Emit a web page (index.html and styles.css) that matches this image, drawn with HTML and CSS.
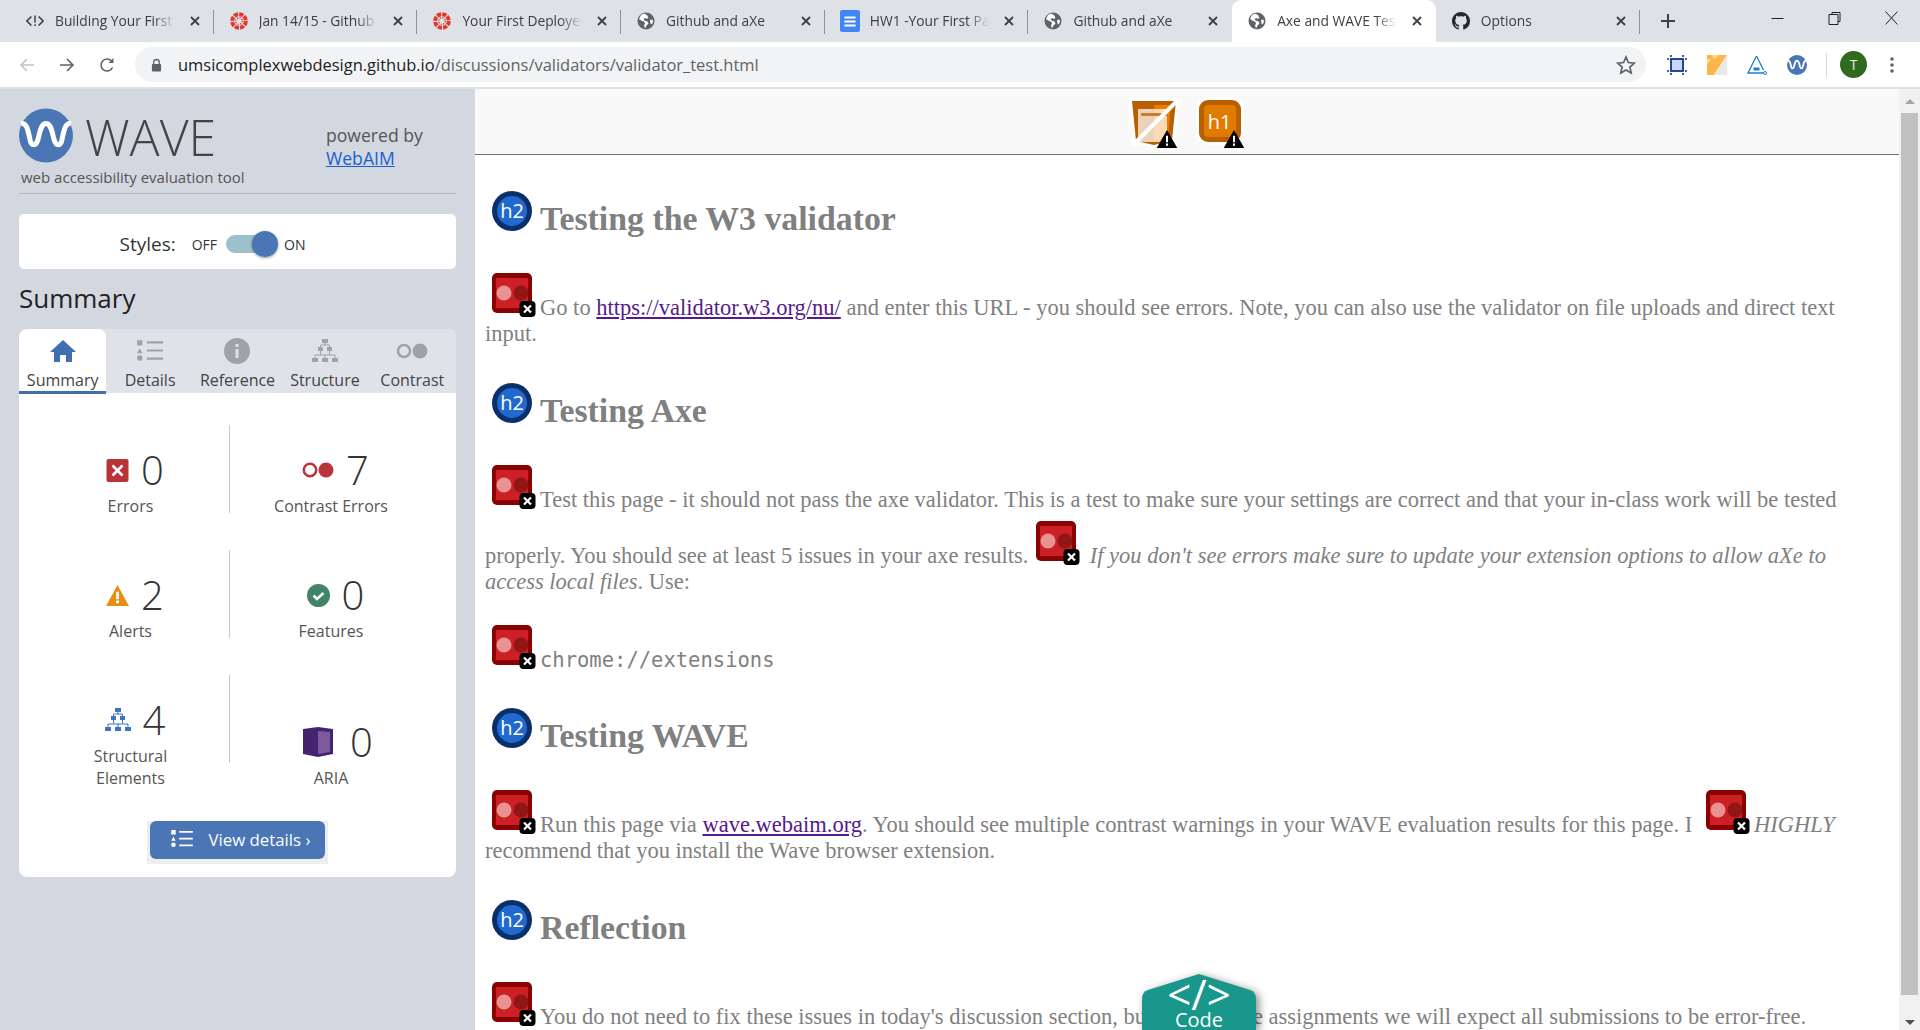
FILE: index.html
```html
<!DOCTYPE html>
<html lang="en">
<head>
    <meta charset="UTF-8">
    <meta name="viewport" content="width=device-width, initial-scale=1.0">
    <title>Axe and WAVE Test</title>
    <link rel="stylesheet" href="styles.css">
</head>
<body>
    <!-- shared icons -->
    <svg class="defs" aria-hidden="true">
        <symbol id="i-globe" viewBox="0 0 18 18">
            <circle cx="9" cy="9" r="8.5" fill="#5f6368"/>
            <path d="M7 1.5 4 3 2 7l3 2 2 .5 1 2-1 2 1 3 1.5-3 2-2-1-2-3-1-1-1.500 2-1 1 1 2-1-1.500-3zM13 8l2.500-.5.5 2.500-1.500 2.500-1-1z" fill="#fff"/>
        </symbol>
        <symbol id="i-canvas" viewBox="0 0 20 20">
            <circle cx="10" cy="10" r="7.600" fill="none" stroke="#e7352b" stroke-width="4.400" stroke-dasharray="4.700 1.270"/>
            <circle cx="10" cy="10" r="3.700" fill="none" stroke="#e7352b" stroke-width="1.500" stroke-dasharray="1.500 1.400"/>
        </symbol>
        <symbol id="i-close" viewBox="0 0 12 12">
            <path d="M2 2l8 8M10 2l-8 8" stroke="#3c4043" stroke-width="1.800" fill="none"/>
        </symbol>
        <symbol id="i-list" viewBox="0 0 24 20">
            <path d="M0 0h5v5H0zM2.500 7.500 5 12H0zM9 1h15v2H9zM9 8.500h15v2H9zM9 16h15v2H9z" fill="currentColor"/>
            <circle cx="2.500" cy="16.500" r="2.500" fill="currentColor"/>
        </symbol>
        <symbol id="i-tree" viewBox="0 0 26 24">
            <path d="M10 0h6v4h-6zM6 8h5v4H6zM15 8h5v4h-5zM0 19h6v4H0zM10 19h6v4h-6zM20 19h6v4h-6z" fill="currentColor"/>
            <path d="M13 4v2.500M8.500 8V6h9v2M8.500 12v3.500M17.500 12v3.500M3 19v-3h20v3M13 15.500V19" stroke="currentColor" fill="none"/>
        </symbol>
        <symbol id="i-contrast" viewBox="0 0 32 16">
            <circle cx="8" cy="8" r="6" fill="none" stroke="currentColor" stroke-width="2.500"/>
            <circle cx="24" cy="8" r="7.500" fill="currentColor"/>
        </symbol>
        <symbol id="i-error" viewBox="0 0 44 44">
            <rect width="40" height="40" rx="5" fill="#8b0000"/>
            <rect x="4" y="5" width="32" height="30" fill="#cb2026"/>
            <circle cx="12" cy="20" r="7.500" fill="#e89292"/>
            <circle cx="29" cy="20" r="7.500" fill="#921616"/>
            <rect x="27.500" y="28" width="16" height="16" rx="4" fill="#000"/>
            <path d="M32 32.500l7 7M39 32.500l-7 7" stroke="#fff" stroke-width="2.200"/>
        </symbol>
        <symbol id="i-h2" viewBox="0 0 44 44">
            <circle cx="20" cy="20" r="20" fill="#0a2f6b"/>
            <circle cx="20" cy="20" r="15" fill="#2168cf"/>
        </symbol>
        <symbol id="i-alert" viewBox="0 0 16 14">
            <path d="M8 0l8 14H0z" fill="#000"/>
            <path d="M7.200 4.500h1.600v5H7.200zM7.200 10.500h1.600v1.800H7.200z" fill="#fff"/>
        </symbol>
    </svg>

    <!-- browser chrome -->
    <div class="tabstrip">
        <div class="tab tab-sep">
            <svg class="tab-icon" viewBox="0 0 20 14"><path d="M6 2 1 7l5 5M14 2l5 5-5 5" fill="none" stroke="#3c4043" stroke-width="1.800"/><path d="M9.200 1h1.600v8H9.200zM9.200 10.500h1.600v2H9.200z" fill="#3c4043"/></svg>
            <span class="tab-title">Building Your First Page</span>
            <svg class="tab-close"><use href="#i-close"/></svg>
        </div>
        <div class="tab tab-sep">
            <svg class="tab-icon"><use href="#i-canvas"/></svg>
            <span class="tab-title">Jan 14/15 - Github and</span>
            <svg class="tab-close"><use href="#i-close"/></svg>
        </div>
        <div class="tab tab-sep">
            <svg class="tab-icon"><use href="#i-canvas"/></svg>
            <span class="tab-title">Your First Deployed Site</span>
            <svg class="tab-close"><use href="#i-close"/></svg>
        </div>
        <div class="tab tab-sep">
            <svg class="tab-icon"><use href="#i-globe"/></svg>
            <span class="tab-title">Github and aXe</span>
            <svg class="tab-close"><use href="#i-close"/></svg>
        </div>
        <div class="tab tab-sep">
            <svg class="tab-icon tab-icon-doc" viewBox="0 0 18 22" preserveAspectRatio="none"><rect width="18" height="22" rx="2" fill="#4285f4"/><path d="M4 6.500h10v2H4zM4 10.500h10v2H4zM4 14.500h10v2H4z" fill="#fff"/></svg>
            <span class="tab-title">HW1 -Your First Page</span>
            <svg class="tab-close"><use href="#i-close"/></svg>
        </div>
        <div class="tab">
            <svg class="tab-icon"><use href="#i-globe"/></svg>
            <span class="tab-title">Github and aXe</span>
            <svg class="tab-close"><use href="#i-close"/></svg>
        </div>
        <div class="tab tab-active">
            <svg class="tab-icon"><use href="#i-globe"/></svg>
            <span class="tab-title">Axe and WAVE Test Page</span>
            <svg class="tab-close"><use href="#i-close"/></svg>
        </div>
        <div class="tab tab-sep">
            <svg class="tab-icon" viewBox="0 0 16 16"><path fill="#24292e" d="M8 0C3.580 0 0 3.580 0 8c0 3.540 2.290 6.530 5.470 7.590.4.070.55-.17.55-.38 0-.19-.01-.82-.01-1.490-2.010.37-2.530-.49-2.690-.94-.09-.23-.48-.94-.82-1.130-.28-.15-.68-.52-.01-.53.63-.01 1.080.58 1.230.82.72 1.210 1.870.87 2.330.66.07-.52.28-.87.51-1.070-1.780-.2-3.640-.89-3.640-3.950 0-.87.31-1.590.82-2.150-.08-.2-.36-1.020.08-2.120 0 0 .67-.21 2.200.82.64-.18 1.320-.27 2-.27.68 0 1.360.09 2 .27 1.530-1.040 2.200-.82 2.200-.82.44 1.100.16 1.920.08 2.120.51.56.82 1.270.82 2.150 0 3.070-1.870 3.750-3.650 3.950.29.25.54.73.54 1.480 0 1.070-.01 1.930-.01 2.200 0 .21.15.46.55.38A8.013 8.013 0 0016 8c0-4.420-3.580-8-8-8z"/></svg>
            <span class="tab-title">Options</span>
            <svg class="tab-close"><use href="#i-close"/></svg>
        </div>
        <svg class="new-tab" viewBox="0 0 16 16"><path d="M8 1v14M1 8h14" stroke="#3c4043" stroke-width="2"/></svg>
        <div class="win-buttons">
            <svg viewBox="0 0 14 14"><path d="M1 7.500h12" stroke="#222"/></svg>
            <svg viewBox="0 0 14 14"><path d="M4.500 3.500V1.500h8v9h-2M1.500 3.500h9v10h-9z" fill="none" stroke="#222"/></svg>
            <svg viewBox="0 0 14 14"><path d="M1 .5l12 13M13 .5l-12 13" stroke="#222"/></svg>
        </div>
    </div>

    <div class="toolbar">
        <svg class="nav-icon" viewBox="0 0 16 16"><path d="M15 8H2M8 2 2 8l6 6" fill="none" stroke="#c0c3c7" stroke-width="1.600"/></svg>
        <svg class="nav-icon" viewBox="0 0 16 16"><path d="M1 8h13M8 2l6 6-6 6" fill="none" stroke="#5f6368" stroke-width="1.600"/></svg>
        <svg class="nav-icon" viewBox="0 0 16 16"><path d="M13.500 10.500A6 6 0 1 1 12.500 4" fill="none" stroke="#5f6368" stroke-width="1.600"/><path d="M14.500 1v5h-5z" fill="#5f6368"/></svg>
        <div class="omnibox">
            <svg class="lock" viewBox="0 0 12 14"><path d="M3 6V4a3 3 0 0 1 6 0v2" fill="none" stroke="#5f6368" stroke-width="1.400"/><rect x="1" y="6" width="10" height="8" rx="1" fill="#5f6368"/></svg>
            <span class="url"><span class="url-host">umsicomplexwebdesign.github.io</span>/discussions/validators/validator_test.html</span>
            <svg class="star" viewBox="0 0 20 20"><path d="M10 2l2.400 5.500 6 .6-4.500 4 1.300 5.900L10 15l-5.200 3 1.300-5.900-4.500-4 6-.6z" fill="none" stroke="#5f6368" stroke-width="1.700"/></svg>
        </div>
        <div class="extensions">
            <svg class="ext" viewBox="0 0 20 20"><rect x="4" y="4" width="12" height="12" fill="#c6d8f7" stroke="#12357f" stroke-width="1.800"/><path d="M4 0v2M16 0v2M4 18v2M16 18v2M0 4h2M0 16h2M18 4h2M18 16h2" stroke="#12357f" stroke-width="1.600"/></svg>
            <svg class="ext" viewBox="0 0 20 20"><path d="M0 0h20L7 20H0z" fill="#fbb64a"/><path d="M20 0v20H7z" fill="#e8e8e8"/><path d="M0 4h4l-4 6zM4 0l4 4 4-4z" fill="#ffd88a"/></svg>
            <svg class="ext" viewBox="0 0 20 20"><path d="M9.500 1 1 18h15.500" fill="none" stroke="#1f7ad1" stroke-width="1.300"/><path d="M9.500 1l7 14" fill="none" stroke="#1f7ad1" stroke-width="1.300"/><circle cx="18" cy="18" r="1.500" fill="none" stroke="#1f7ad1"/><path d="M6.500 12.500h6v3h-6z" fill="#1f7ad1"/></svg>
            <svg class="ext" viewBox="0 0 54 54"><circle cx="27" cy="27" r="27" fill="#4a76b5"/><path d="M2 15C8 14 9 22 11 31c1 7 6 7 8 0 2-8 3-16 8-16s6 8 8 16c2 7 7 7 8 0 2-9 3-17 9-16" fill="none" stroke="#fff" stroke-width="5"/></svg>
            <span class="ext-sep"></span>
            <span class="avatar">T</span>
            <svg class="kebab" viewBox="0 0 4 16"><circle cx="2" cy="2" r="1.800" fill="#5f6368"/><circle cx="2" cy="8" r="1.800" fill="#5f6368"/><circle cx="2" cy="14" r="1.800" fill="#5f6368"/></svg>
        </div>
    </div>

    <div class="app">
        <!-- WAVE sidebar -->
        <aside class="sidebar">
            <header class="brand">
                <div class="brand-main">
                    <div class="brand-logo">
                        <svg class="logo-mark" viewBox="0 0 54 54"><circle cx="27" cy="27" r="27" fill="#4a76b5"/><path d="M2 15C8 14 9 22 11 31c1 7 6 7 8 0 2-8 3-16 8-16s6 8 8 16c2 7 7 7 8 0 2-9 3-17 9-16" fill="none" stroke="#fff" stroke-width="5"/></svg>
                        <span class="logo-text">WAVE</span>
                    </div>
                    <div class="brand-sub">web accessibility evaluation tool</div>
                </div>
                <div class="powered">powered by<br><a href="#">WebAIM</a></div>
            </header>

            <div class="styles-card">
                <span class="styles-label">Styles:</span>
                <span class="switch-text">OFF</span>
                <span class="switch"><span class="switch-knob"></span></span>
                <span class="switch-text">ON</span>
            </div>

            <h1 class="side-title">Summary</h1>

            <div class="panel">
                <nav class="panel-tabs">
                    <div class="ptab ptab-active">
                        <svg class="ptab-icon" viewBox="0 0 26 24"><path d="M13 1 0 13h4v10h6v-7h6v7h6V13h4z" fill="#3f6fb0"/></svg>
                        <span>Summary</span>
                    </div>
                    <div class="ptab">
                        <svg class="ptab-icon"><use href="#i-list"/></svg>
                        <span>Details</span>
                    </div>
                    <div class="ptab">
                        <svg class="ptab-icon" viewBox="0 0 26 26"><circle cx="13" cy="13" r="13" fill="currentColor"/><path d="M11.500 11h3v9h-3zM11.500 6h3v3h-3z" fill="#dfe3e9"/></svg>
                        <span>Reference</span>
                    </div>
                    <div class="ptab">
                        <svg class="ptab-icon"><use href="#i-tree"/></svg>
                        <span>Structure</span>
                    </div>
                    <div class="ptab">
                        <svg class="ptab-icon ptab-icon-wide"><use href="#i-contrast"/></svg>
                        <span>Contrast</span>
                    </div>
                </nav>

                <div class="stats">
                    <div class="stat stat-left">
                        <div class="stat-row">
                            <svg class="stat-icon" viewBox="0 0 22 23"><rect width="22" height="23" rx="2" fill="#b93439"/><path d="M6 6.500l10 10M16 6.500l-10 10" stroke="#fff" stroke-width="2.600"/></svg>
                            <span class="stat-num">0</span>
                        </div>
                        <div class="stat-label">Errors</div>
                    </div>
                    <div class="stat">
                        <div class="stat-row">
                            <svg class="stat-icon stat-icon-wide" viewBox="0 0 32 16"><circle cx="8" cy="8" r="6.200" fill="none" stroke="#b93439" stroke-width="2.500"/><circle cx="24" cy="8" r="7.500" fill="#b93439"/></svg>
                            <span class="stat-num">7</span>
                        </div>
                        <div class="stat-label">Contrast Errors</div>
                    </div>
                    <div class="stat stat-left">
                        <div class="stat-row">
                            <svg class="stat-icon" viewBox="0 0 25 23"><path d="M12.500 0 25 23H0z" fill="#e78f14"/><path d="M11 7.500h3v8h-3zM11 17h3v3h-3z" fill="#fff"/></svg>
                            <span class="stat-num">2</span>
                        </div>
                        <div class="stat-label">Alerts</div>
                    </div>
                    <div class="stat">
                        <div class="stat-row">
                            <svg class="stat-icon" viewBox="0 0 23 23"><circle cx="11.500" cy="11.500" r="11.500" fill="#418467"/><path d="M6.500 11.500l3.500 3.500 6.500-6" fill="none" stroke="#fff" stroke-width="2.500"/></svg>
                            <span class="stat-num">0</span>
                        </div>
                        <div class="stat-label">Features</div>
                    </div>
                    <div class="stat stat-left">
                        <div class="stat-row">
                            <svg class="stat-icon stat-icon-tree"><use href="#i-tree"/></svg>
                            <span class="stat-num">4</span>
                        </div>
                        <div class="stat-label">Structural Elements</div>
                    </div>
                    <div class="stat stat-low">
                        <div class="stat-row">
                            <svg class="stat-icon stat-icon-aria" viewBox="0 0 30 30"><path d="M0 2 15 0l15 2v25l-15 3-15-3z" fill="#45246e"/><path d="M15 4l12 1v20l-12 2z" fill="#7c5a9e"/></svg>
                            <span class="stat-num">0</span>
                        </div>
                        <div class="stat-label">ARIA</div>
                    </div>
                </div>

                <div class="details-wrap">
                    <div class="details-halo">
                        <button class="details-btn">
                            <svg class="details-icon"><use href="#i-list"/></svg>
                            View details ›
                        </button>
                    </div>
                </div>
            </div>
        </aside>

        <!-- page being evaluated -->
        <main class="page">
            <div class="page-scroll">
                <div class="page-top">
                    <span class="top-icon">
                        <svg class="top-shield" viewBox="0 0 52 50">
                            <path d="M0 0h52l-5 44-22 6-21-5z" fill="#fff"/>
                            <path d="M4 3h44l-4 39-18 5-18-4z" fill="#b85f00"/>
                            <path d="M26 7h17l-3 32-14 4z" fill="#e97d00"/>
                            <path d="M10 11h29v33H10z" fill="#fff" opacity=".72"/>
                            <path d="M13 15h26v3H13z" fill="#c77d2e"/>
                            <path d="M4 48 50 2" stroke="#fff" stroke-width="4"/>
                        </svg>
                        <svg class="top-alert"><use href="#i-alert"/></svg>
                    </span>
                    <span class="top-icon top-h1">
                        <span class="top-h1-box">h1</span>
                        <svg class="top-alert"><use href="#i-alert"/></svg>
                    </span>
                </div>

                <div class="page-body">
                    <h2><span class="flag"><svg><use href="#i-h2"/></svg><span class="flag-text">h2</span></span>Testing the W3 validator</h2>
                    <p><svg class="err"><use href="#i-error"/></svg>Go to <a href="#">https://validator.w3.org/nu/</a> and enter this URL - you should see errors. Note, you can also use the validator on file uploads and direct text input.</p>

                    <h2><span class="flag"><svg><use href="#i-h2"/></svg><span class="flag-text">h2</span></span>Testing Axe</h2>
                    <p><svg class="err"><use href="#i-error"/></svg>Test this page - it should not pass the axe validator. This is a test to make sure your settings are correct and that your in-class work will be tested properly. You should see at least 5 issues in your axe results. <svg class="err err-tight"><use href="#i-error"/></svg> <em>If you don't see errors make sure to update your extension options to allow aXe to access local files</em>. Use:</p>
                    <pre><svg class="err"><use href="#i-error"/></svg>chrome://extensions</pre>

                    <h2><span class="flag"><svg><use href="#i-h2"/></svg><span class="flag-text">h2</span></span>Testing WAVE</h2>
                    <p><svg class="err"><use href="#i-error"/></svg>Run this page via <a href="#">wave.webaim.org</a>. You should see multiple contrast warnings in your WAVE evaluation results for this page. I <svg class="err err-flush"><use href="#i-error"/></svg><em>HIGHLY</em> recommend that you install the Wave browser extension.</p>

                    <h2><span class="flag"><svg><use href="#i-h2"/></svg><span class="flag-text">h2</span></span>Reflection</h2>
                    <p><svg class="err"><use href="#i-error"/></svg>You do not need to fix these issues in today's discussion section, but in all future assignments we will expect all submissions to be error-free.</p>
                </div>

                <div class="code-tab">
                    <svg class="code-shape" viewBox="0 0 114 56"><path d="M57 0 108 16q6 2 6 9v31H0V25q0-7 6-9z" fill="#1a978c"/></svg>
                    <span class="code-glyph">&lt;/&gt;</span>
                    <span class="code-text">Code</span>
                </div>
            </div>

            <div class="scrollbar">
                <span class="arrow arrow-up"></span>
                <span class="thumb"></span>
                <span class="arrow arrow-down"></span>
            </div>
        </main>
    </div>
</body>
</html>
```

FILE: styles.css
```css
* {
    box-sizing: border-box;
}
html, body {
    margin: 0;
    height: 1030px;
    overflow: hidden;
}
body {
    font-family: "Open Sans", sans-serif;
    background: #fff;
    display: flex;
    flex-direction: column;
}
.defs {
    display: none;
}

/* browser tabs */
.tabstrip {
    display: flex;
    align-items: stretch;
    height: 42px;
    padding-left: 10px;
    background: #dee1e6;
    flex-shrink: 0;
}
.tab {
    position: relative;
    display: flex;
    align-items: center;
    width: 203.7px;
    padding-left: 16px;
    padding-right: 13px;
    font-size: 13.8px;
    color: #3c4043;
}
.tab-sep::after {
    content: "";
    position: absolute;
    right: 0;
    top: 10px;
    height: 24px;
    width: 1px;
    background: #8f9296;
}
.tab-active {
    background: #fff;
    border-radius: 9px 9px 0 0;
}
.tab-icon {
    width: 18px;
    height: 18px;
    flex-shrink: 0;
}
.tab-icon-doc {
    width: 20px;
    height: 22px;
    margin: 0 -1px;
}
.tab-title {
    flex: 1;
    margin: 0 14px 2px 11px;
    overflow: hidden;
    white-space: nowrap;
    -webkit-mask-image: linear-gradient(to right, #000 82%, transparent 100%);
    mask-image: linear-gradient(to right, #000 82%, transparent 100%);
}
.tab-close {
    width: 12px;
    height: 12px;
    flex-shrink: 0;
}
.new-tab {
    width: 16px;
    height: 16px;
    margin: 13px 0 0 20px;
}
.win-buttons {
    margin-left: auto;
    display: flex;
    align-items: flex-start;
}
.win-buttons svg {
    width: 57px;
    height: 14px;
    margin-top: 11px;
}

/* address bar */
.toolbar {
    display: flex;
    align-items: center;
    height: 47px;
    padding-left: 7px;
    background: #fff;
    border-bottom: 2px solid #dee1e6;
    flex-shrink: 0;
}
.nav-icon {
    width: 16px;
    height: 16px;
    margin: 0 12px;
}
.omnibox {
    display: flex;
    align-items: center;
    flex: 1;
    height: 35px;
    margin-left: 8px;
    padding: 0 10px 0 16px;
    background: #f1f3f4;
    border-radius: 18px;
}
.lock {
    width: 11px;
    height: 14px;
    margin-right: 16px;
}
.url {
    flex: 1;
    font-size: 16.47px;
    color: #5f6368;
}
.url-host {
    color: #202124;
}
.star {
    width: 20px;
    height: 20px;
}
.extensions {
    display: flex;
    align-items: center;
    width: 274px;
    padding-left: 21px;
}
.ext {
    width: 20px;
    height: 20px;
    margin-right: 20px;
}
.ext-sep {
    width: 1px;
    height: 24px;
    margin-left: -1px;
    background: #d5d7da;
}
.avatar {
    display: flex;
    align-items: center;
    justify-content: center;
    width: 27px;
    height: 27px;
    margin-left: 13px;
    border-radius: 50%;
    background: #2f6a1d;
    color: #e6efe2;
    font-size: 14px;
}
.kebab {
    width: 4px;
    height: 16px;
    margin-left: 23px;
}

.app {
    display: flex;
    flex: 1;
    min-height: 0;
}

/* WAVE sidebar */
.sidebar {
    width: 475px;
    flex-shrink: 0;
    padding: 0 19px;
    background: #d3d8e0;
    color: #333;
}
.brand {
    display: flex;
    justify-content: space-between;
    height: 105px;
    padding-top: 19px;
    border-bottom: 1px solid #b4b8be;
}
.brand-logo {
    display: flex;
    align-items: center;
}
.logo-mark {
    width: 54px;
    height: 55px;
}
.logo-text {
    margin: 2px 0 -2px 12px;
    font-size: 50px;
    font-weight: 300;
    line-height: 55px;
    color: #444;
}
.brand-sub {
    margin: 4px 0 0 2px;
    font-size: 15px;
    color: #555;
    line-height: 20px;
}
.powered {
    width: 130px;
    margin-top: 16px;
    font-size: 17.6px;
    line-height: 23px;
    color: #555;
}
.powered a {
    color: #1a5fd0;
}
.styles-card {
    display: flex;
    align-items: center;
    justify-content: center;
    height: 55px;
    margin-top: 20px;
    padding: 5px 50px 0 0;
    background: #fff;
    border-radius: 5px;
}
.styles-label {
    font-size: 19px;
    margin-right: 16px;
}
.switch-text {
    font-size: 14px;
    text-transform: uppercase;
}
.switch {
    position: relative;
    width: 46px;
    height: 18px;
    margin: 0 12px 0 9px;
    background: #9cc0cc;
    border-radius: 9px;
}
.switch-knob {
    position: absolute;
    right: -6px;
    top: -4px;
    width: 26px;
    height: 26px;
    border-radius: 50%;
    background: #4a76b5;
    box-shadow: 0 1px 3px rgba(0, 0, 0, .4);
}
.side-title {
    margin: 11px 0 13px;
    font-size: 26px;
    font-weight: 400;
    line-height: 36px;
    color: #222;
}
.panel {
    background: #fff;
    border-radius: 8px;
    overflow: hidden;
}
.panel-tabs {
    display: grid;
    grid-template-columns: repeat(5, 1fr);
    height: 64px;
    background: #dfe3e9;
}
.ptab {
    display: flex;
    flex-direction: column;
    align-items: center;
    padding-top: 9px;
    font-size: 16px;
    line-height: 22px;
    color: #a0a2a6;
}
.ptab span {
    color: #444;
}
.ptab-active {
    background: #fff;
    border-bottom: 3px solid #3f6fb0;
    border-radius: 8px 8px 0 0;
}
.ptab-icon {
    width: 26px;
    height: 26px;
    margin-bottom: 5px;
}
.ptab-icon-wide {
    width: 32px;
}

/* stat counts */
.stats {
    display: grid;
    grid-template-columns: 198px 202px;
    grid-auto-rows: 88px;
    row-gap: 37px;
    padding: 32px 24px 0 13px;
}
.stat {
    text-align: center;
}
.stat-left {
    border-right: 1px solid #c8c8c8;
}
.stat-low {
    padding-top: 22px;
}
.stat-row {
    display: flex;
    align-items: center;
    justify-content: center;
    height: 50px;
    margin-top: 20px;
    padding-left: 9px;
}
.stat-low .stat-row {
    padding-left: 14px;
}
.stat-icon {
    width: 23px;
    height: 23px;
    margin-right: 12px;
    color: #3f75bd;
}
.stat-icon-wide {
    width: 32px;
    height: 16px;
}
.stat-icon-tree {
    width: 26px;
    height: 24px;
}
.stat-icon-aria {
    width: 30px;
    height: 30px;
    margin-right: 17px;
}
.stat-num {
    font-size: 40px;
    font-weight: 300;
    line-height: 50px;
    color: #333;
}
.stat-label {
    font-size: 16px;
    line-height: 22px;
    color: #555;
    padding: 0 40px;
}
.details-wrap {
    display: flex;
    justify-content: center;
    margin-top: 58px;
    padding-bottom: 13px;
}
.details-halo {
    padding: 0 3px 5px;
    background: #eee;
}
.details-btn {
    display: flex;
    align-items: center;
    justify-content: center;
    width: 175px;
    height: 38px;
    padding: 0 0 2px 5px;
    border: 0;
    border-radius: 6px;
    background: #4a76b5;
    color: #fff;
    font-family: inherit;
    font-size: 16.8px;
}
.details-icon {
    width: 24px;
    height: 18px;
    margin-right: 15px;
    color: #fff;
}

/* evaluated page */
.page {
    display: flex;
    flex: 1;
    min-width: 0;
}
.page-scroll {
    position: relative;
    flex: 1;
    min-width: 0;
    overflow: hidden;
}
.page-top {
    display: flex;
    justify-content: center;
    gap: 19px;
    height: 66px;
    padding-top: 9px;
    background: #f9f9f9;
    border-bottom: 1px solid #6b7568;
}
.top-icon {
    position: relative;
    display: block;
    width: 52px;
    height: 50px;
}
.top-shield {
    width: 52px;
    height: 50px;
}
.top-h1 {
    width: 48px;
}
.top-h1-box {
    display: flex;
    align-items: center;
    justify-content: center;
    width: 42px;
    height: 42px;
    margin-top: 2px;
    border: 5px solid #b85f00;
    border-radius: 9px;
    background: #e07b00;
    box-shadow: 0 0 0 3px #fff;
    color: #fff;
    font-size: 20px;
}
.top-alert {
    position: absolute;
    right: 2px;
    bottom: 0;
    width: 22px;
    height: 18px;
}
.page-body {
    padding: 0 32px 0 10px;
    font-family: "Liberation Serif", serif;
    font-size: 22.5px;
    line-height: 26px;
    color: #808080;
}
.page-body h2 {
    margin: 36px 0 0;
    font-size: 33.8px;
    line-height: 37px;
}
.page-body p {
    margin: 28px 0 0;
}
.page-body pre {
    margin: 22px 0 -1px;
    font-family: "DejaVu Sans Mono", monospace;
    font-size: 20.5px;
}
.page-body a {
    color: #551a8b;
}
.err {
    width: 44px;
    height: 44px;
    margin: 8px 4px 0 7px;
    vertical-align: -2px;
}
.err-tight {
    margin-left: 2px;
}
.err-flush {
    margin-left: 8px;
}
.flag {
    position: relative;
    display: inline-block;
    width: 44px;
    height: 44px;
    margin: 0 4px 0 7px;
    vertical-align: -5px;
}
.flag svg {
    width: 44px;
    height: 44px;
}
.flag-text {
    position: absolute;
    left: 0;
    top: 0;
    width: 40px;
    text-align: center;
    font-family: "Open Sans", sans-serif;
    font-size: 20px;
    font-weight: 400;
    line-height: 40px;
    color: #fff;
}

.code-tab {
    position: absolute;
    left: 667px;
    bottom: 0;
    width: 114px;
    height: 56px;
    color: #fff;
    text-align: center;
}
.code-shape {
    position: absolute;
    left: 0;
    top: 0;
    width: 114px;
    height: 56px;
    filter: drop-shadow(3px 2px 4px rgba(0, 0, 0, .45));
}
.code-glyph {
    position: absolute;
    left: 0;
    right: 0;
    top: -2px;
    font-size: 42px;
    line-height: 44px;
}
.code-text {
    position: absolute;
    left: 0;
    right: 0;
    top: 33px;
    font-size: 20px;
    line-height: 26px;
}

/* page scrollbar */
.scrollbar {
    display: flex;
    flex-direction: column;
    align-items: center;
    width: 21px;
    flex-shrink: 0;
    background: #f1f1f1;
}
.thumb {
    width: 17px;
    height: 882px;
    margin-top: 9px;
    background: #c1c1c1;
}
.arrow {
    width: 0;
    height: 0;
    border-left: 5px solid transparent;
    border-right: 5px solid transparent;
}
.arrow-up {
    margin-top: 10px;
    border-bottom: 5px solid #a3a3a3;
}
.arrow-down {
    margin-top: 25px;
    border-top: 5px solid #505050;
}
```
